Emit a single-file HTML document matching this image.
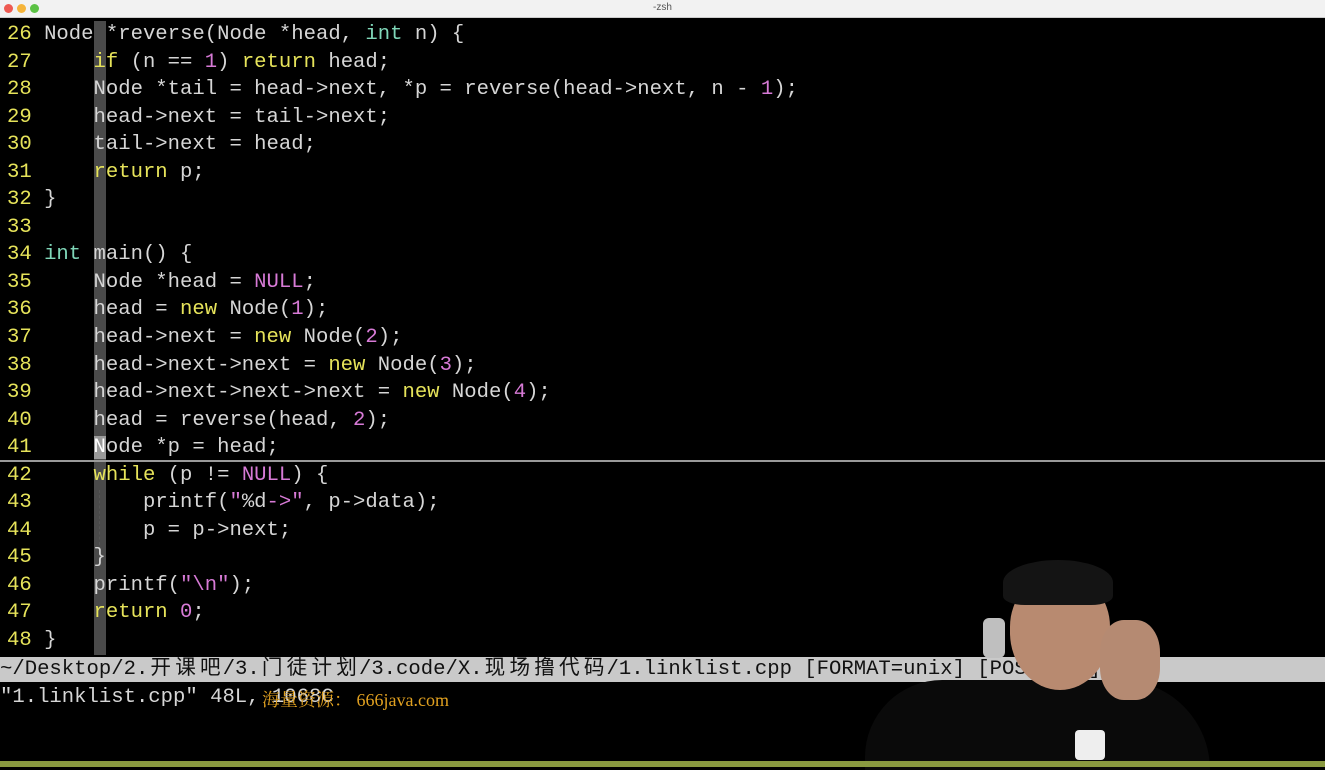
<!DOCTYPE html>
<html><head><meta charset="utf-8"><style>
body{margin:0;width:1325px;height:767px;background:#000;overflow:hidden;position:relative;font-family:"Liberation Mono","Noto Sans CJK SC",monospace;}
.tb{position:absolute;left:0;top:0;width:1325px;height:17px;background:#f2f2f2;border-bottom:1px solid #ccc;}
.tb span{position:absolute;left:0;right:0;text-align:center;top:2px;font:10px "Liberation Sans",sans-serif;color:#555}
.d{position:absolute;top:4px;width:9px;height:9px;border-radius:50%}
.code{position:absolute;left:7px;top:21px;font-size:20.6px;line-height:27.55px;color:#d6d6d6;white-space:pre;}
.n{color:#e6e35a}.k{color:#e6e35a}.m{color:#d77ad6}.t{color:#7fd6b8}
.col{position:absolute;left:94px;top:21px;width:12px;height:634px;background:#4a4a4a}
.cur{position:absolute;left:0;top:460px;width:1325px;height:2px;background:#9a9a9a}
.status{position:absolute;left:0;top:657px;width:1325px;height:25px;background:#c9c9c9;color:#111;font-size:20.6px;line-height:25px;white-space:pre}
.c{display:inline-block;width:24.8px;text-align:center}
.msg{position:absolute;left:0;top:684px;font-size:20.6px;line-height:27px;color:#d6d6d6;white-space:pre}
.wm{position:absolute;left:262px;top:686px;color:#e0a020;font:18px "Liberation Serif","Noto Serif CJK SC",serif}
.green{position:absolute;left:0;top:761px;width:1325px;height:6px;background:#8a9a40}
</style></head><body>
<div class="tb"><div class="d" style="left:4px;background:#ee5a52"></div><div class="d" style="left:17px;background:#f5b43a"></div><div class="d" style="left:30px;background:#5cc245"></div><span>-zsh</span></div>
<div class="col"></div>
<div class="cur"></div>
<div style="position:absolute;left:99px;top:490px;height:60px;border-left:1px dashed #555"></div>
<div class="code"><span class="n">26</span> Node *reverse(Node *head, <span class="t">int</span> n) {
<span class="n">27</span>     <span class="k">if</span> (n == <span class="m">1</span>) <span class="k">return</span> head;
<span class="n">28</span>     Node *tail = head-&gt;next, *p = reverse(head-&gt;next, n - <span class="m">1</span>);
<span class="n">29</span>     head-&gt;next = tail-&gt;next;
<span class="n">30</span>     tail-&gt;next = head;
<span class="n">31</span>     <span class="k">return</span> p;
<span class="n">32</span> }
<span class="n">33</span>
<span class="n">34</span> <span class="t">int</span> main() {
<span class="n">35</span>     Node *head = <span class="m">NULL</span>;
<span class="n">36</span>     head = <span class="k">new</span> Node(<span class="m">1</span>);
<span class="n">37</span>     head-&gt;next = <span class="k">new</span> Node(<span class="m">2</span>);
<span class="n">38</span>     head-&gt;next-&gt;next = <span class="k">new</span> Node(<span class="m">3</span>);
<span class="n">39</span>     head-&gt;next-&gt;next-&gt;next = <span class="k">new</span> Node(<span class="m">4</span>);
<span class="n">40</span>     head = reverse(head, <span class="m">2</span>);
<span class="n">41</span>     <span style="background:#999;color:#fff">N</span>ode *p = head;
<span class="n">42</span>     <span class="k">while</span> (p != <span class="m">NULL</span>) {
<span class="n">43</span>         printf(<span class="m">"</span>%d<span class="m">-&gt;</span><span class="m">"</span>, p-&gt;data);
<span class="n">44</span>         p = p-&gt;next;
<span class="n">45</span>     }
<span class="n">46</span>     printf(<span class="m">"\n"</span>);
<span class="n">47</span>     <span class="k">return</span> <span class="m">0</span>;
<span class="n">48</span> }</div>
<div class="status">~/Desktop/2.<span class="c">开</span><span class="c">课</span><span class="c">吧</span>/3.<span class="c">门</span><span class="c">徒</span><span class="c">计</span><span class="c">划</span>/3.code/X.<span class="c">现</span><span class="c">场</span><span class="c">撸</span><span class="c">代</span><span class="c">码</span>/1.linklist.cpp [FORMAT=unix] [POS=41,5][85%]</div>
<div class="msg">"1.linklist.cpp" 48L, 1068C</div>
<div class="wm">海量资源： 666java.com</div>
<div style="position:absolute;left:983px;top:618px;width:22px;height:40px;background:#bfbfbf;border-radius:6px"></div>
<div style="position:absolute;left:865px;top:680px;width:345px;height:90px;background:#0a0a0a;border-radius:120px 140px 0 0"></div>
<div style="position:absolute;left:1010px;top:575px;width:100px;height:115px;background:#b88a70;border-radius:45% 45% 50% 50%"></div>
<div style="position:absolute;left:1003px;top:560px;width:110px;height:45px;background:#141414;border-radius:50% 50% 20% 20%"></div>
<div style="position:absolute;left:1100px;top:620px;width:60px;height:80px;background:#b58a72;border-radius:40%"></div>
<div style="position:absolute;left:1075px;top:730px;width:30px;height:30px;background:#eee;border-radius:4px"></div>
<div class="green"></div>
</body></html>
